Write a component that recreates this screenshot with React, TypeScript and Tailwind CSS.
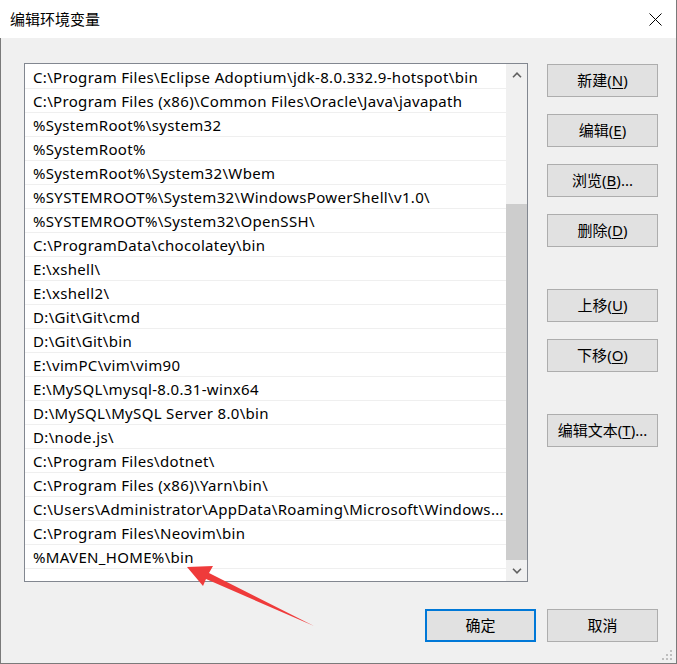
import React from 'react'

const paths = [
  'C:\\Program Files\\Eclipse Adoptium\\jdk-8.0.332.9-hotspot\\bin',
  'C:\\Program Files (x86)\\Common Files\\Oracle\\Java\\javapath',
  '%SystemRoot%\\system32',
  '%SystemRoot%',
  '%SystemRoot%\\System32\\Wbem',
  '%SYSTEMROOT%\\System32\\WindowsPowerShell\\v1.0\\',
  '%SYSTEMROOT%\\System32\\OpenSSH\\',
  'C:\\ProgramData\\chocolatey\\bin',
  'E:\\xshell\\',
  'E:\\xshell2\\',
  'D:\\Git\\Git\\cmd',
  'D:\\Git\\Git\\bin',
  'E:\\vimPC\\vim\\vim90',
  'E:\\MySQL\\mysql-8.0.31-winx64',
  'D:\\MySQL\\MySQL Server 8.0\\bin',
  'D:\\node.js\\',
  'C:\\Program Files\\dotnet\\',
  'C:\\Program Files (x86)\\Yarn\\bin\\',
  'C:\\Users\\Administrator\\AppData\\Roaming\\Microsoft\\Windows...',
  'C:\\Program Files\\Neovim\\bin',
  '%MAVEN_HOME%\\bin',
  '',
]

const font = "font-['Noto_Sans','Noto_Sans_CJK_SC',sans-serif]"

const Btn = ({ label, keyName, tail }: { label: string, keyName: string, tail?: string }) => {
  return (
    <button className={`w-[111px] h-[33px] bg-[#e1e1e1] border border-[#adadad] text-[15px] text-black flex items-center justify-center ${font}`}>
      {label}(<span className="underline underline-offset-2">{keyName}</span>){tail}
    </button>
  )
}

const App = () => {
  return (
    <div className={`relative w-[677px] h-[664px] bg-[#f0f0f0] flex flex-col border-r border-b border-[#7a7a7a] ${font}`}>
      <div className="h-[38px] bg-white flex items-center justify-between pl-[10px] pr-[14px]">
        <span className="text-[15px] text-black">编辑环境变量</span>
        <svg width="13" height="13" viewBox="0 0 13 13">
          <path d="M0.5 0.5 L12.5 12.5 M12.5 0.5 L0.5 12.5" stroke="#000" strokeWidth="1" />
        </svg>
      </div>

      <div className="flex-1 flex flex-col border-l border-[#7a7a7a] pl-[23px] pt-[25px]">
        <div className="flex gap-[19px]">
          <div className="w-[504px] h-[519px] border border-[#828790] bg-white flex">
            <div className="flex-1 overflow-hidden pt-[1px]">
              {paths.map((p, i) => (
                <div key={i} className="h-[24px] border-b border-[#efefef] pl-[8px] pr-[2px] flex items-center">
                  <span className="text-[15px] leading-[20px] tracking-[0.33px] text-black whitespace-nowrap">{p}</span>
                </div>
              ))}
            </div>
            <div className="w-[21px] bg-[#f0f0f0] flex flex-col">
              <div className="h-[21px] flex items-center justify-center">
                <svg width="10" height="6" viewBox="0 0 10 6">
                  <path d="M1 5.2 L5 1.2 L9 5.2" stroke="#606060" strokeWidth="1.6" fill="none" />
                </svg>
              </div>
              <div className="flex-1" />
              <div className="h-[356px] bg-[#cdcdcd]" />
              <div className="h-[21px] flex items-center justify-center">
                <svg width="10" height="6" viewBox="0 0 10 6">
                  <path d="M1 0.8 L5 4.8 L9 0.8" stroke="#606060" strokeWidth="1.6" fill="none" />
                </svg>
              </div>
            </div>
          </div>

          <div className="flex flex-col pt-[1px]">
            <Btn label="新建" keyName="N" />
            <div className="mt-[17px]"><Btn label="编辑" keyName="E" /></div>
            <div className="mt-[17px]"><Btn label="浏览" keyName="B" tail="..." /></div>
            <div className="mt-[17px]"><Btn label="删除" keyName="D" /></div>
            <div className="mt-[42px]"><Btn label="上移" keyName="U" /></div>
            <div className="mt-[17px]"><Btn label="下移" keyName="O" /></div>
            <div className="mt-[42px]"><Btn label="编辑文本" keyName="T" tail="..." /></div>
          </div>
        </div>

        <div className="flex justify-end gap-[11px] pr-[18px] mt-[27px]">
          <button className="w-[111px] h-[33px] bg-[#e1e1e1] border-2 border-[#0078d7] text-[15px] text-black">确定</button>
          <button className="w-[111px] h-[33px] bg-[#e1e1e1] border border-[#adadad] text-[15px] text-black">取消</button>
        </div>
      </div>

      <svg className="absolute left-[662px] top-[650px]" width="12" height="12" viewBox="0 0 12 12">
        <rect x="8" y="0" width="2" height="2" fill="#bfbfbf" />
        <rect x="4" y="4" width="2" height="2" fill="#bfbfbf" />
        <rect x="8" y="4" width="2" height="2" fill="#bfbfbf" />
        <rect x="0" y="8" width="2" height="2" fill="#bfbfbf" />
        <rect x="4" y="8" width="2" height="2" fill="#bfbfbf" />
        <rect x="8" y="8" width="2" height="2" fill="#bfbfbf" />
      </svg>

      <svg className="absolute left-[185px] top-[564px] pointer-events-none" width="132" height="66" viewBox="0 0 132 66">
        <polygon points="2,3 28,2 24,9 129,62 21,15 18,22" fill="#ef3b3b" />
      </svg>
    </div>
  )
}

export default App
